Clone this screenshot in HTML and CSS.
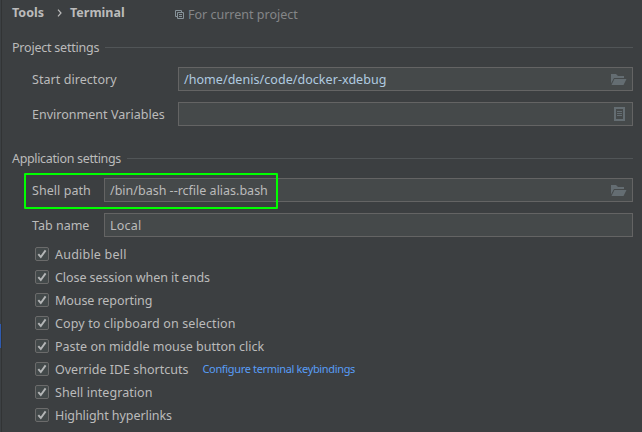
FILE: index.html
```
<!DOCTYPE html>
<html lang="en">
<head>
<meta charset="utf-8">
<title>Terminal settings</title>
<link rel="stylesheet" href="styles.css">
</head>
<body>
<svg class="defs" aria-hidden="true">
  <symbol id="folder" viewBox="0 0 16 12"><path d="M0 0h5l2 2h6v2H3L0 9.500z"/><path d="M3.400 5H15.500L12.500 11H.500z"/></symbol>
  <symbol id="check" viewBox="0 0 14 14"><rect x=".5" y=".5" width="13" height="13" rx="1.500" fill="#43494a" stroke="#6b6b6b"/><path d="M3.300 7.200 5.800 10 10.600 3.400" fill="none" stroke="#b4b6b7" stroke-width="1.900"/></symbol>
</svg>
<div class="window">
  <aside class="sidebar"><div class="selection"></div></aside>
  <main class="settings">
    <header class="header">
      <span class="crumb tools">Tools</span>
      <svg class="chevron" width="5" height="8"><path d="M1 .7 4 4 1 7.300" fill="none" stroke="#bbb" stroke-width="1.200"/></svg>
      <span class="crumb terminal">Terminal</span>
      <span class="scope"><svg width="9" height="9" fill="none" stroke="#87939a"><path d="M2 6.500H.5V.5H6.500V2M2.500 2.500H8.500V8.500H2.500zM4 4.500H7M4 6.500H7"/></svg><span class="scope-text">For current project</span></span>
    </header>
    <h2 class="section"><span class="t-project">Project settings</span></h2>
    <div class="fields project">
      <label class="t-start">Start directory</label>
      <div class="input"><span class="path t-dir">/home/denis/code/docker-xdebug</span><svg class="folder"><use href="#folder"/></svg></div>
      <label class="t-env">Environment Variables</label>
      <div class="input"><svg class="list" width="11" height="14"><path d="M1 1H10V13H1z" fill="none" stroke="#646d72" stroke-width="2"/><path d="M3 4.500H8M3 6.500H8M3 8.500H8" stroke="#646d72"/></svg></div>
    </div>
    <h2 class="section"><span class="t-app">Application settings</span></h2>
    <div class="fields application">
      <label class="t-shell">Shell path</label>
      <div class="input"><span class="t-bash">/bin/bash --rcfile alias.bash</span><svg class="folder"><use href="#folder"/></svg></div>
      <label class="t-tab">Tab name</label>
      <div class="input"><span class="t-local">Local</span></div>
      <div class="highlight"></div>
    </div>
    <div class="options">
      <div class="option"><svg><use href="#check"/></svg><span class="t-bell">Audible bell</span></div>
      <div class="option"><svg><use href="#check"/></svg><span class="t-close">Close session when it ends</span></div>
      <div class="option"><svg><use href="#check"/></svg><span class="t-mouse">Mouse reporting</span></div>
      <div class="option"><svg><use href="#check"/></svg><span class="t-copy">Copy to clipboard on selection</span></div>
      <div class="option"><svg><use href="#check"/></svg><span class="t-paste">Paste on middle mouse button click</span></div>
      <div class="option"><svg><use href="#check"/></svg><span class="t-override">Override IDE shortcuts</span><a class="link">Configure terminal keybindings</a></div>
      <div class="option"><svg><use href="#check"/></svg><span class="t-integration">Shell integration</span></div>
      <div class="option"><svg><use href="#check"/></svg><span class="t-hyper">Highlight hyperlinks</span></div>
    </div>
  </main>
</div>
</body>
</html>
```
FILE: styles.css
```
* { box-sizing: border-box; }
body { margin: 0; background: #3c3f41; color: #bbb; font: 12.5px/18px "Noto Sans", sans-serif; overflow: hidden; }
svg { display: block; flex: none; }
span, label, a { white-space: nowrap; }
.defs { width: 0; height: 0; position: absolute; }
.window { display: flex; height: 432px; }
.sidebar { width: 2px; flex: none; background: #3c4043; border-right: 1px solid #323435; padding-top: 324px; }
.selection { height: 24px; background: #2f5bb0; }
.settings { flex: 1; padding: 4px 9px 0 10px; }
.header { display: flex; align-items: center; height: 18px; }
.crumb { font-weight: 700; }
.tools { width: 34px; }
.chevron { margin: 0 8px 0 11px; }
.terminal { width: 55px; }
.scope { display: flex; align-items: center; gap: 4px; margin-left: 50px; padding-top: 3px; color: #848688; }
.section { display: flex; align-items: center; gap: 6px; height: 18px; margin: 16px 0 0; font: inherit; }
.section span { padding-top: 1px; }
.section::after { content: ""; flex: 1; height: 1px; background: #515557; }
.fields { display: grid; row-gap: 11px; position: relative; }
.fields label { padding: 1px 0 0 20px; align-self: center; }
.project { grid-template-columns: 166px 1fr; margin: 11px 0 23px; }
.application { grid-template-columns: 92px 1fr; margin-top: 11px; }
.project + .section { margin-top: 23px; }
.input { display: flex; align-items: center; height: 24px; border: 1px solid #646464; background: #45494a; padding: 0 5px; }
.input span { padding-top: 1px; }
.path { color: #b0cbe0; }
.folder { width: 16px; height: 12px; margin: 2px 0 0 auto; fill: #646d72; }
.list { margin: 0 2px 0 auto; }
.highlight { position: absolute; left: 12px; top: -5px; width: 254px; height: 36px; border: 2px solid #0f0; border-radius: 1px; }
.options { padding: 6px 0 0 23px; }
.option { display: flex; align-items: center; height: 23px; }
.option svg { width: 14px; height: 14px; margin: -1px 6px 0 0; }
.link { color: #589df6; font-size: 11px; letter-spacing: -.34px; margin: -1px 0 0 14px; }
.t-project { letter-spacing: -.22px; }
.t-app { letter-spacing: -.34px; }
.t-start, .t-shell, .t-integration { letter-spacing: .06px; }
.t-env { letter-spacing: .02px; }
.t-dir { letter-spacing: .05px; }
.t-local { letter-spacing: .2px; }
.t-bell { letter-spacing: .22px; }
.t-close, .t-mouse, .t-hyper { letter-spacing: -.07px; }
.t-copy { letter-spacing: .12px; }
```
